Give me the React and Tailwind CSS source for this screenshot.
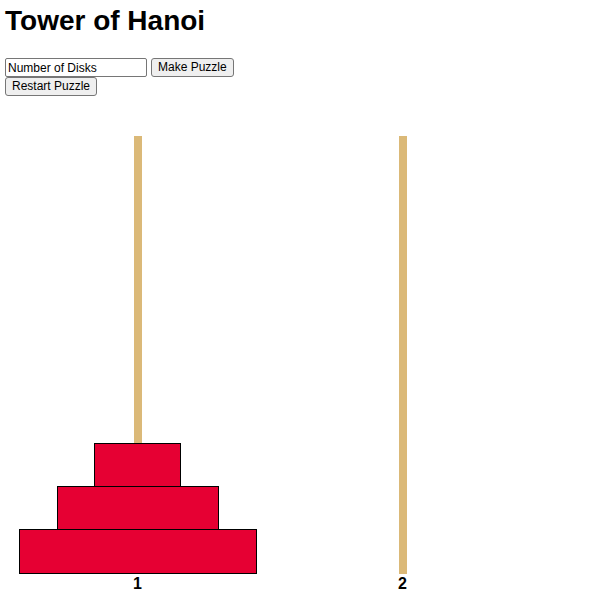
import React from "react";

const towers = [
  { label: "1", disks: [87, 162, 238] },
  { label: "2", disks: [] },
];

function Tower({ label, disks }) {
  return (
    <div className="flex w-[265px] shrink-0 flex-col items-center">
      <div className="flex h-[438px] w-full flex-col items-center">
        <div className="w-[8px] flex-1 bg-[#dbb978]" />
        {disks.map((w, i) => (
          <div
            key={i}
            className={
              "shrink-0 border border-black bg-[#e60033] " +
              (i > 0 ? "-mt-px " : "") +
              (i === disks.length - 1 ? "h-[45px]" : "h-[44px]")
            }
            style={{ width: w }}
          />
        ))}
      </div>
      <div className="pt-px text-[16px] font-bold leading-[18px] text-black">{label}</div>
    </div>
  );
}

export default function App() {
  return (
    <div className="min-h-[600px] overflow-hidden bg-white p-[5px] font-['Liberation_Sans',Arial,sans-serif] text-black">
      <h1 className="mb-[21px] text-[28px] font-bold leading-[32px]">Tower of Hanoi</h1>
      <div className="flex gap-[4px]">
        <input
          type="text"
          placeholder="Number of Disks"
          className="h-[19px] w-[142px] rounded-[2px] border border-[#767676] px-[2px] text-[12px] leading-[15px] placeholder-black outline-none"
        />
        <button className="h-[19px] rounded-[3px] border border-[#767676] bg-[#efefef] px-[6px] text-[12px] leading-[15px]">
          Make Puzzle
        </button>
      </div>
      <div className="flex">
        <button className="h-[19px] rounded-[3px] border border-[#767676] bg-[#efefef] px-[6px] text-[12px] leading-[15px]">
          Restart Puzzle
        </button>
      </div>
      <div className="mt-[40px] flex">
        {towers.map((t) => (
          <Tower key={t.label} {...t} />
        ))}
      </div>
    </div>
  );
}
